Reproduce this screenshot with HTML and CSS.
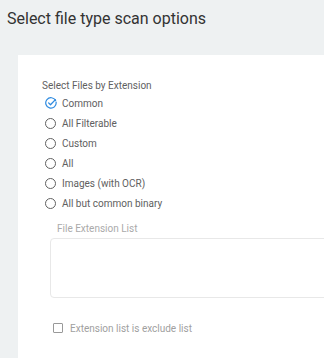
FILE: index.html
```html
<!DOCTYPE html>
<html lang="en">
<head>
  <meta charset="UTF-8">
  <title>Scan options</title>
  <link rel="stylesheet" href="styles.css">
</head>
<body>

  <h1 class="page-title">Select file type scan options</h1>

  <div class="card">
    <div class="group-label">Select Files by Extension</div>

    <div class="radio-list">
      <div class="radio-row">
        <svg class="radio-checked" width="12" height="12" viewBox="0 0 12 12">
          <path d="M10.6 3.6 A5.2 5.2 0 1 0 11.1 5.2" fill="none" stroke="#2f8be0" stroke-width="1.2" stroke-linecap="round"/>
          <path d="M3.6 5.9 L5.5 7.8 L10.4 2.6" fill="none" stroke="#2f8be0" stroke-width="1.3" stroke-linecap="round" stroke-linejoin="round"/>
        </svg>
        <span>Common</span>
      </div>
      <div class="radio-row"><span class="radio"></span><span>All Filterable</span></div>
      <div class="radio-row"><span class="radio"></span><span>Custom</span></div>
      <div class="radio-row"><span class="radio"></span><span>All</span></div>
      <div class="radio-row"><span class="radio"></span><span>Images (with OCR)</span></div>
      <div class="radio-row"><span class="radio"></span><span>All but common binary</span></div>
    </div>

    <div class="field">
      <div class="field-label">File Extension List</div>
      <div class="field-box"></div>
    </div>

    <div class="check-row">
      <span class="checkbox"></span>
      <span>Extension list is exclude list</span>
    </div>
  </div>

</body>
</html>
```

FILE: styles.css
```css
body {
  margin: 0;
  background: #eef1f2;
  font-family: Roboto, "Liberation Sans", sans-serif;
  overflow: hidden;
  height: 100vh;
}

.page-title {
  margin: 0;
  padding: 8px 7px 0;
  font-size: 16px;
  line-height: 22px;
  font-weight: 400;
  color: #333;
}

.card {
  margin: 25px 0 0 18px;
  width: 306px;
  height: 303px;
  background: #fff;
  padding: 24px 0 0 24px;
  box-sizing: border-box;
  overflow: hidden;
}

.group-label {
  font-size: 10px;
  line-height: 14px;
  color: #5f5f5f;
}

.radio-list {
  padding-left: 3px;
}

.radio-row {
  display: flex;
  align-items: center;
  gap: 6px;
  height: 20px;
  font-size: 10px;
  color: #606060;
}

.radio {
  width: 11px;
  height: 11px;
  border: 1px solid #606060;
  border-radius: 50%;
  box-sizing: border-box;
}

.radio-checked {
  margin-left: -0.5px;
  margin-right: -0.5px;
}

.field {
  margin: 9px 0 0 8px;
}

.field-label {
  font-size: 10px;
  line-height: 14px;
  color: #aaa;
  padding-left: 7px;
}

.field-box {
  margin-top: 2px;
  height: 60px;
  width: 320px;
  border: 1px solid #e8e8e8;
  border-radius: 4px;
  box-sizing: border-box;
}

.check-row {
  display: flex;
  align-items: center;
  gap: 7px;
  margin: 23px 0 0 11px;
  height: 14px;
  font-size: 10px;
  color: #a0a0a0;
}

.checkbox {
  width: 10px;
  height: 10px;
  border: 1px solid #999;
  border-radius: 1px;
  box-sizing: border-box;
}
```
